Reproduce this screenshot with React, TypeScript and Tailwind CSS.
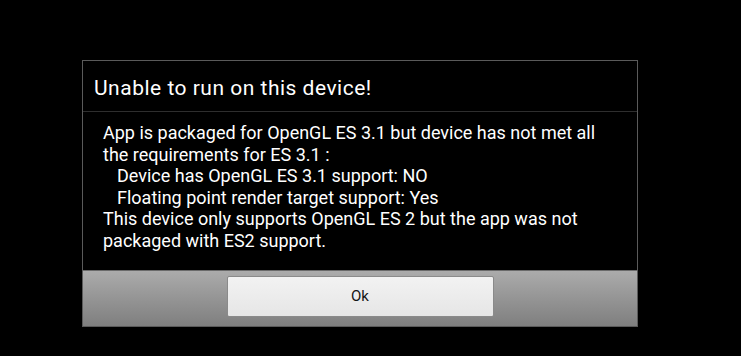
export default function App() {
  return (
    <div className="w-[741px] h-[356px] bg-black pt-[60px] pl-[82px] font-['Roboto',sans-serif]">
      <div className="w-[556px] h-[267px] border border-[#5a5a5a] flex flex-col bg-black">
        {/* title */}
        <div className="h-[51px] flex items-center pl-[11px] pt-[4px] border-b border-[#2e2e2e]">
          <span className="text-white text-[21px] tracking-[0.5px] leading-none">Unable to run on this device!</span>
        </div>
        {/* message */}
        <div className="flex-1 pl-[20px] pt-[10px] text-white text-[18px] leading-[21.6px]">
          <p>App is packaged for OpenGL ES 3.1 but device has not met all</p>
          <p>the requirements for ES 3.1 :</p>
          <p className="pl-[14px]">Device has OpenGL ES 3.1 support: NO</p>
          <p className="pl-[14px]">Floating point render target support: Yes</p>
          <p>This device only supports OpenGL ES 2 but the app was not</p>
          <p>packaged with ES2 support.</p>
        </div>
        {/* button bar */}
        <div className="h-[56px] border-t border-[#6a6a6a] bg-gradient-to-b from-[#ababab] to-[#7f7f7f] flex justify-center pt-[5px] pb-[8px]">
          <button className="w-[267px] h-[41px] rounded-[2px] border border-[#8a8a8a] bg-gradient-to-b from-[#f2f2f2] to-[#e6e6e6] text-[#151515] text-[15px]">
            Ok
          </button>
        </div>
      </div>
    </div>
  );
}
